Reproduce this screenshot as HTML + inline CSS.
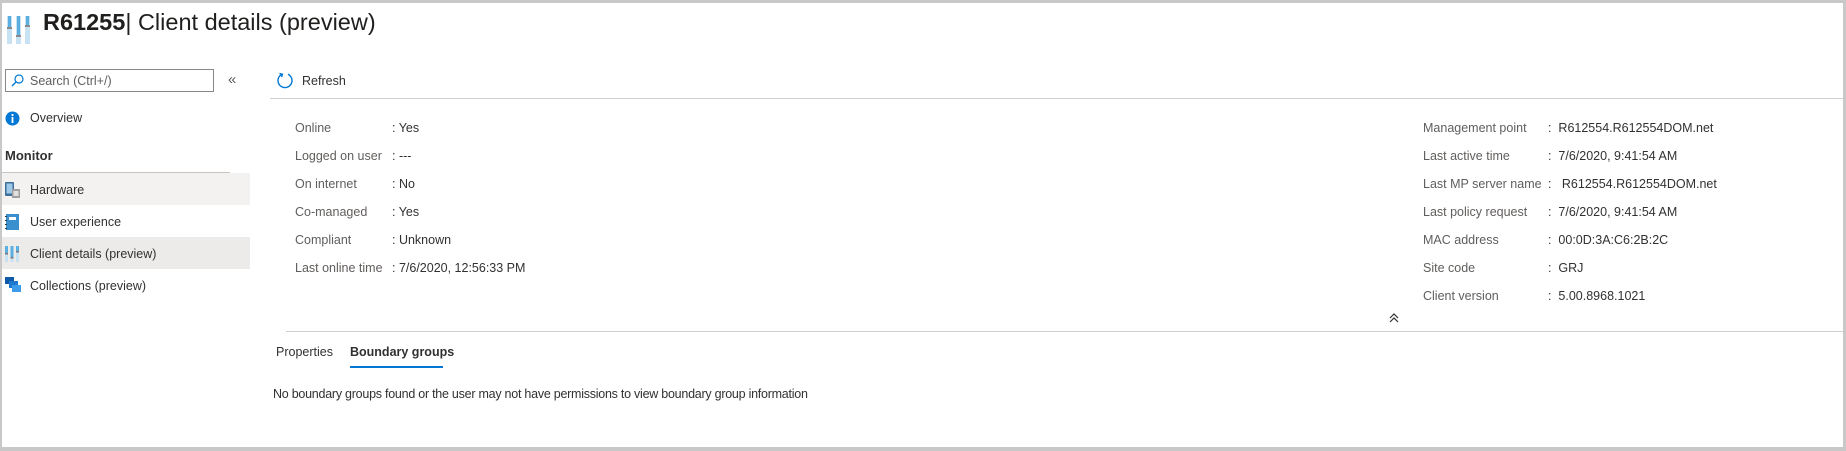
<!DOCTYPE html>
<html><head><meta charset="utf-8"><style>
*{margin:0;padding:0;box-sizing:border-box}
html,body{width:1846px;height:451px;overflow:hidden;background:#fff}
body{font-family:"Liberation Sans",sans-serif;color:#323130;position:relative}
.frame{position:absolute;left:0;top:0;width:1846px;height:451px;border-top:3px solid #c8c8c8;border-left:2px solid #c8c8c8;border-right:3px solid #c8c8c8;border-bottom:4px solid #c8c8c8}
.a{position:absolute;white-space:nowrap}
.t13{font-size:12.5px;line-height:16px}
.lbl{color:#605e5c}
</style></head><body>
<div class="frame"></div>
<svg class="a" style="left:7px;top:15px" width="24" height="29" viewBox="0 0 24 29">
<rect x="0" y="1" width="5" height="28" fill="#c7e3f3"/><rect x="1" y="1" width="3" height="12" fill="#5aaee0"/><rect x="0" y="12" width="5" height="2" fill="#8a8a8a"/>
<rect x="9" y="1" width="5" height="28" fill="#c7e3f3"/><rect x="10" y="1" width="3" height="20" fill="#5aaee0"/><rect x="9" y="20" width="5" height="2" fill="#8a8a8a"/>
<rect x="18" y="1" width="5" height="28" fill="#c7e3f3"/><rect x="19" y="1" width="3" height="10" fill="#5aaee0"/><rect x="18" y="10" width="5" height="2" fill="#8a8a8a"/>
</svg>
<div class="a" style="left:43px;top:8px;font-size:23.5px;line-height:28px;color:#201f1e"><b>R61255</b>| Client details (preview)</div>

<div class="a" style="left:5px;top:69px;width:209px;height:23px;border:1px solid #8a8886"></div>
<svg class="a" style="left:11px;top:74px" width="13" height="13" viewBox="0 0 13 13"><circle cx="8" cy="5" r="4" fill="none" stroke="#0078d4" stroke-width="1.2"/><line x1="5" y1="8" x2="1" y2="12" stroke="#0078d4" stroke-width="1.3"/></svg>
<div class="a t13" style="left:30px;top:73px;color:#605e5c">Search (Ctrl+/)</div>
<div class="a" style="left:228px;top:71px;font-size:15px;color:#605e5c">«</div>

<svg class="a" style="left:5px;top:111px" width="15" height="15"><circle cx="7.5" cy="7.5" r="7" fill="#0078d4"/><rect x="6.6" y="6" width="1.8" height="6" fill="#fff"/><circle cx="7.5" cy="4" r="1.1" fill="#fff"/></svg>
<div class="a t13" style="left:30px;top:110px">Overview</div>
<div class="a" style="left:5px;top:148px;font-size:13px;font-weight:bold;color:#323130">Monitor</div>
<div class="a" style="left:2px;top:172px;width:228px;height:1px;background:#c8c6c4"></div>
<div class="a" style="left:2px;top:173px;width:248px;height:32px;background:#f3f2f1"></div>
<div class="a" style="left:2px;top:237px;width:248px;height:32px;background:#edebe9"></div>
<svg class="a" style="left:5px;top:182px" width="15" height="16"><rect x="0" y="0" width="9" height="14" rx="1" fill="#3e6f9a"/><rect x="1.5" y="1.5" width="6" height="10" fill="#9fc9e8"/><rect x="7" y="7" width="8" height="9" fill="#a0a0a0"/><rect x="8.5" y="9" width="5" height="5" fill="#e0e0e0"/></svg>
<div class="a t13" style="left:30px;top:182px">Hardware</div>
<svg class="a" style="left:5px;top:214px" width="14" height="16"><rect x="1" y="0" width="13" height="16" fill="#3a8fcf"/><rect x="4" y="3" width="7" height="3" fill="#fff"/><rect x="0" y="2" width="2" height="1" fill="#333"/><rect x="0" y="6" width="2" height="1" fill="#333"/><rect x="0" y="10" width="2" height="1" fill="#333"/><rect x="0" y="14" width="2" height="1" fill="#333"/></svg>
<div class="a t13" style="left:30px;top:214px">User experience</div>
<svg class="a" style="left:5px;top:246px" width="14" height="16"><rect x="0" y="0" width="3" height="16" fill="#c7e3f3"/><rect x="0" y="0" width="3" height="7" fill="#5aaee0"/><rect x="0" y="7" width="3" height="1.5" fill="#777"/><rect x="5.5" y="0" width="3" height="16" fill="#c7e3f3"/><rect x="5.5" y="0" width="3" height="11" fill="#5aaee0"/><rect x="5.5" y="11" width="3" height="1.5" fill="#777"/><rect x="11" y="0" width="3" height="16" fill="#c7e3f3"/><rect x="11" y="0" width="3" height="5" fill="#5aaee0"/><rect x="11" y="5" width="3" height="1.5" fill="#777"/></svg>
<div class="a t13" style="left:30px;top:246px">Client details (preview)</div>
<svg class="a" style="left:5px;top:277px" width="16" height="16"><rect x="0" y="0" width="9" height="7" fill="#0e5aa7"/><rect x="4" y="4" width="9" height="7" fill="#1e78d0"/><rect x="7" y="8" width="9" height="7" fill="#3d9be9"/></svg>
<div class="a t13" style="left:30px;top:278px">Collections (preview)</div>

<svg class="a" style="left:276px;top:72px" width="18" height="18" viewBox="0 0 18 18"><path d="M6 2.2 A7 7 0 1 0 12 2.2" fill="none" stroke="#0078d4" stroke-width="1.4"/><path d="M3.5 1.5 L6.5 2.2 L5.5 5" fill="none" stroke="#0078d4" stroke-width="1.4"/></svg>
<div class="a t13" style="left:302px;top:73px">Refresh</div>
<div class="a" style="left:270px;top:98px;width:1573px;height:1px;background:#d2d0ce"></div>

<div class="a t13 lbl" style="left:295px;top:114px;line-height:28px">Online<br>Logged on user<br>On internet<br>Co-managed<br>Compliant<br>Last online time</div>
<div class="a t13" style="left:392px;top:114px;line-height:28px">: Yes<br>: ---<br>: No<br>: Yes<br>: Unknown<br>: 7/6/2020, 12:56:33 PM</div>
<div class="a t13 lbl" style="left:1423px;top:114px;line-height:28px">Management point<br>Last active time<br>Last MP server name<br>Last policy request<br>MAC address<br>Site code<br>Client version</div>
<div class="a t13" style="left:1548px;top:114px;line-height:28px">:&nbsp; R612554.R612554DOM.net<br>:&nbsp; 7/6/2020, 9:41:54 AM<br>:&nbsp;&nbsp; R612554.R612554DOM.net<br>:&nbsp; 7/6/2020, 9:41:54 AM<br>:&nbsp; 00:0D:3A:C6:2B:2C<br>:&nbsp; GRJ<br>:&nbsp; 5.00.8968.1021</div>
<svg class="a" style="left:1389px;top:313px" width="10" height="10" viewBox="0 0 10 10"><path d="M1 5 L5 1 L9 5 M1 9 L5 5 L9 9" fill="none" stroke="#323130" stroke-width="1.2"/></svg>
<div class="a" style="left:286px;top:331px;width:1557px;height:1px;background:#d2d0ce"></div>

<div class="a t13" style="left:276px;top:344px">Properties</div>
<div class="a t13" style="left:350px;top:344px;font-weight:bold;color:#323130">Boundary groups</div>
<div class="a" style="left:350px;top:366px;width:93px;height:2px;background:#0078d4"></div>
<div class="a t13" style="left:273px;top:386px;letter-spacing:-0.25px">No boundary groups found or the user may not have permissions to view boundary group information</div>
</body></html>
